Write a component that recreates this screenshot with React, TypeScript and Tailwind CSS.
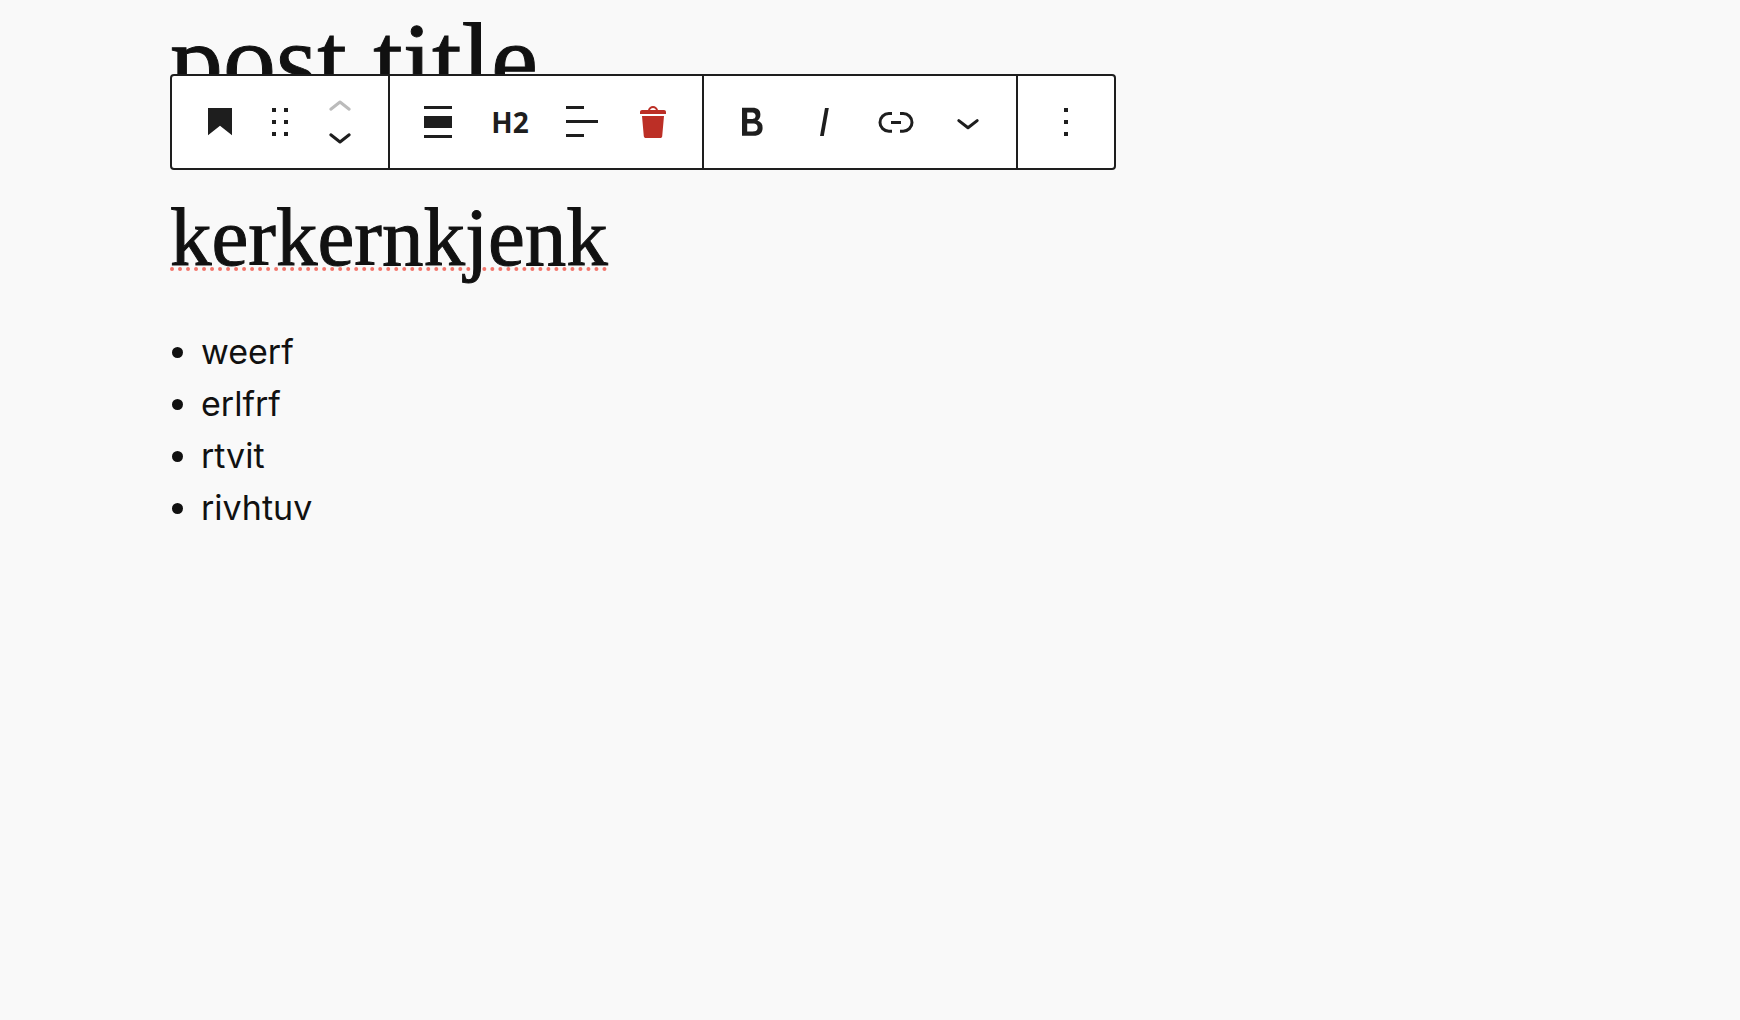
import type { ReactNode } from "react";

const ITEMS = ["weerf", "erlfrf", "rtvit", "rivhtuv"];

const ICONS = {
  heading: "M6 5V18.5911L12 13.8473L18 18.5911V5H6Z",
  drag: "M8 7h2V5H8v2zm0 6h2v-2H8v2zm0 6h2v-2H8v2zm6-14v2h2V5h-2zm0 8h2v-2h-2v2zm0 6h2v-2h-2v2z",
  alignNone: "M5 4h14v1.5H5zM5 9h14v6H5zM5 18.5h14V20H5z",
  textLeft: "M4 4h9v1.5H4zM4 11h16v1.5H4zM4 18h9v1.5H4z",
  bold: "M14.7 11.3c1-.6 1.5-1.6 1.5-3 0-2.3-1.3-3.4-4-3.4H7v14h5.8c1.4 0 2.5-.3 3.3-1 .8-.7 1.2-1.7 1.2-2.9.1-1.9-.8-3.1-2.6-3.7zm-5.1-4h2.3c.6 0 1.1.1 1.4.4.3.3.5.7.5 1.2s-.2 1-.5 1.2c-.3.3-.8.4-1.4.4H9.6V7.3zm4.6 9c-.4.3-1 .4-1.7.4H9.6v-3.9h2.9c.7 0 1.3.2 1.7.5.4.3.6.8.6 1.5s-.2 1.2-.6 1.5z",
  italic: "M12.5 5L10 19h1.9l2.5-14z",
  link: "M10 17.389H8.444A5.194 5.194 0 1 1 8.444 7H10v1.5H8.444a3.694 3.694 0 0 0 0 7.389H10v1.5ZM14 7h1.556a5.194 5.194 0 0 1 0 10.39H14v-1.5h1.556a3.694 3.694 0 0 0 0-7.39H14V7Zm-4.5 6h5v-1.5h-5V13Z",
  more: "M13 19h-2v-2h2v2zm0-6h-2v-2h2v2zm0-6h-2V5h2v2z",
};

function Icon({ d }: { d: string }) {
  return (
    <svg viewBox="0 0 24 24" className="size-12 shrink-0 fill-current" aria-hidden="true">
      <path d={d} />
    </svg>
  );
}

function Chevron({ d, className }: { d: string; className: string }) {
  return (
    <svg
      viewBox={className === "w-12 h-8" ? "0 0 24 16" : "0 0 24 24"}
      className={`${className} shrink-0 fill-none stroke-current`}
      strokeWidth="1.5"
      strokeLinecap="round"
      strokeLinejoin="round"
      aria-hidden="true"
    >
      <path d={d} />
    </svg>
  );
}

function ToolButton({ label, narrow, children }: { label: string; narrow?: boolean; children: ReactNode }) {
  return (
    <button
      type="button"
      aria-label={label}
      className={`flex h-full items-center justify-center ${narrow ? "w-12" : "w-[72px]"}`}
    >
      {children}
    </button>
  );
}

function Group({ children }: { children: ReactNode }) {
  return <div className="flex border-r-2 border-[#1e1e1e] px-3 last:border-r-0">{children}</div>;
}

function BlockToolbar() {
  return (
    <div
      role="toolbar"
      aria-label="Block tools"
      className="absolute top-[74px] left-[170px] flex h-24 rounded border-2 border-[#1e1e1e] bg-white text-[#1e1e1e]"
    >
      <Group>
        <ToolButton label="Heading">
          <Icon d={ICONS.heading} />
        </ToolButton>
        <ToolButton label="Drag" narrow>
          <Icon d={ICONS.drag} />
        </ToolButton>
        <div className="flex w-[72px] flex-col items-center justify-center">
          <button type="button" aria-label="Move up" disabled className="text-[#bbbbbb]">
            <Chevron className="w-12 h-8" d="M7.4 9.6L12 6l4.6 3.6" />
          </button>
          <button type="button" aria-label="Move down">
            <Chevron className="w-12 h-8" d="M7.4 6.4L12 10l4.6-3.6" />
          </button>
        </div>
      </Group>
      <Group>
        <ToolButton label="Align">
          <Icon d={ICONS.alignNone} />
        </ToolButton>
        <ToolButton label="Change heading level">
          <span className="font-['Open_Sans',sans-serif] text-[28px] leading-9 font-bold">H2</span>
        </ToolButton>
        <ToolButton label="Align text">
          <Icon d={ICONS.textLeft} />
        </ToolButton>
        <ToolButton label="Delete">
          <svg viewBox="0 0 20 20" className="size-10 shrink-0 fill-[#bc2f26]" aria-hidden="true">
            <path d="M12 4h3c.6 0 1 .4 1 1v1H3V5c0-.6.5-1 1-1h3c.2-1.1 1.3-2 2.5-2s2.3.9 2.5 2zM8 4h3c-.2-.6-.9-1-1.5-1S8.2 3.4 8 4zM4 7h11l-.9 10.1c0 .5-.5.9-1 .9H5.9c-.5 0-.9-.4-1-.9L4 7z" />
          </svg>
        </ToolButton>
      </Group>
      <Group>
        <ToolButton label="Bold">
          <Icon d={ICONS.bold} />
        </ToolButton>
        <ToolButton label="Italic">
          <Icon d={ICONS.italic} />
        </ToolButton>
        <ToolButton label="Link">
          <Icon d={ICONS.link} />
        </ToolButton>
        <ToolButton label="More formatting">
          <Chevron className="size-12" d="M7.4 11.3L12 14.9l4.6-3.6" />
        </ToolButton>
      </Group>
      <Group>
        <ToolButton label="Options">
          <Icon d={ICONS.more} />
        </ToolButton>
      </Group>
    </div>
  );
}

export default function App() {
  return (
    <main className="relative min-h-screen bg-[#f9f9f9] px-[170px] pt-[3px] text-[#111111]">
      <h1 className="font-['Liberation_Serif',serif] text-[106px] leading-[116px] [-webkit-text-stroke:1px_#111111]">
        post title
      </h1>
      <h2 className="mt-[72px] font-['Liberation_Serif',serif] text-[83px] leading-[92px] [-webkit-text-stroke:1px_#111111]">
        <span className="underline decoration-[#f2766c] decoration-dotted decoration-4 underline-offset-2 [text-decoration-skip-ink:none]">
          kerkernkjenk
        </span>
      </h2>
      <ul className="mt-[43px] font-['Inter',sans-serif] text-[34px] leading-[52px]">
        {ITEMS.map((item) => (
          <li
            key={item}
            className="flex items-center gap-[18px] before:ml-[2px] before:size-[11px] before:rounded-full before:bg-[#111111]"
          >
            {item}
          </li>
        ))}
      </ul>
      <BlockToolbar />
    </main>
  );
}
